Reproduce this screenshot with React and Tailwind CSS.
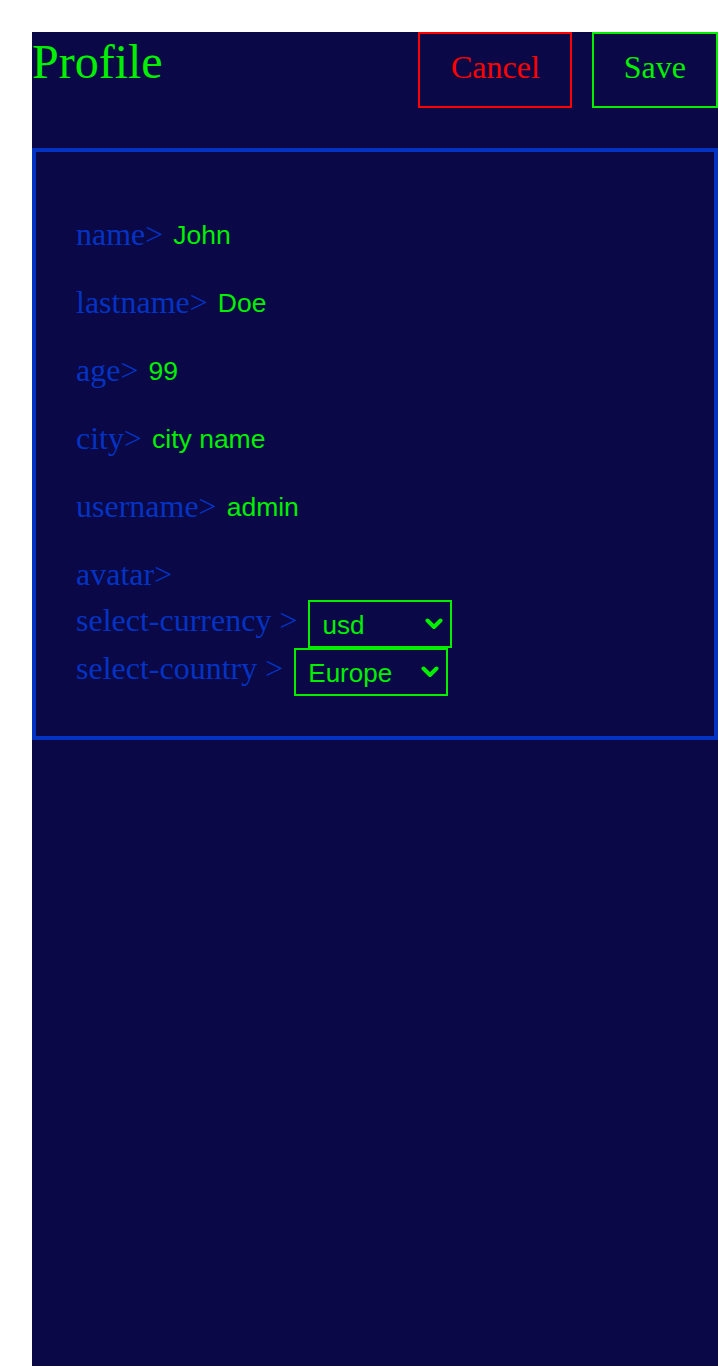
import React from 'react';

const serif = "font-['Liberation_Serif','Times_New_Roman',serif]";
const sans = "font-['Liberation_Sans',Arial,sans-serif]";

const fields = [
  { label: 'name>', value: 'John' },
  { label: 'lastname>', value: 'Doe' },
  { label: 'age>', value: '99' },
  { label: 'city>', value: 'city name' },
  { label: 'username>', value: 'admin' },
];

const Chevron = () => (
  <svg
    className="pointer-events-none absolute right-[9px] top-1/2 -translate-y-1/2"
    width="18"
    height="12"
    viewBox="0 0 18 12"
    fill="none"
  >
    <polyline points="2.5,2.5 9,9 15.5,2.5" stroke="#00f000" strokeWidth="4" strokeLinecap="round" strokeLinejoin="round" />
  </svg>
);

const Dropdown = ({ width, options }) => (
  <div className={`relative ${width} h-[48px]`}>
    <select
      className={`${sans} h-full w-full appearance-none border-2 border-[#00f000] bg-transparent pl-[12px] pt-[2px] text-[26px] text-[#00f000] outline-none`}
      defaultValue={options[0]}
    >
      {options.map((o) => (
        <option key={o} value={o} className="bg-[#0a0846]">
          {o}
        </option>
      ))}
    </select>
    <Chevron />
  </div>
);

export default function App() {
  return (
    <div className="min-h-screen bg-white pt-[32px] pl-[32px]">
      <div className={`${serif} h-[1334px] w-[686px] bg-[#0a0846]`}>
        <div className="flex items-start justify-between h-[76px]">
          <h1 className="mt-[3px] text-[48px] leading-[53px] text-[#00f000]">Profile</h1>
          <div className="flex gap-[20px]">
            <button className="flex h-[76px] items-center border-2 border-[#ff0000] pl-[31px] pr-[30px] pb-[6px] text-[32px] leading-[37px] text-[#ff0000]">
              Cancel
            </button>
            <button className="flex h-[76px] items-center border-2 border-[#00f000] px-[30px] pb-[6px] text-[32px] leading-[37px] text-[#00f000]">
              Save
            </button>
          </div>
        </div>

        <div className="mt-[40px] border-4 border-[#0433c4] pt-[64px] pb-[40px] pl-[40px]">
          {fields.map((f) => (
            <div key={f.label} className="flex h-[68px] items-baseline gap-[10px]">
              <span className="text-[32px] leading-[37px] text-[#0433c4]">{f.label}</span>
              <span className={`${sans} relative -top-[1px] text-[26.5px] text-[#00f000]`}>{f.value}</span>
            </div>
          ))}
          <div className="h-[44px]">
            <span className="text-[32px] leading-[37px] text-[#0433c4]">avatar&gt;</span>
          </div>
          <div className="flex h-[48px] items-start gap-[11px]">
            <span className="mt-[2px] text-[32px] leading-[37px] text-[#0433c4]">select-currency &gt;</span>
            <Dropdown width="w-[144px]" options={['usd', 'eur', 'gbp']} />
          </div>
          <div className="flex h-[48px] items-start gap-[11px]">
            <span className="mt-[2px] text-[32px] leading-[37px] text-[#0433c4]">select-country &gt;</span>
            <Dropdown width="w-[154px]" options={['Europe', 'Asia', 'America']} />
          </div>
        </div>
      </div>
    </div>
  );
}
